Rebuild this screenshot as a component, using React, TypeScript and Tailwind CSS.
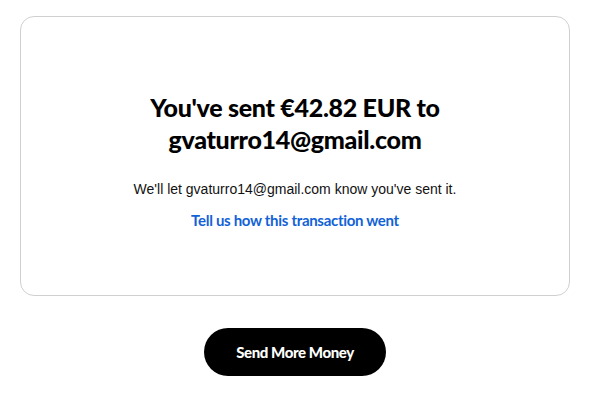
import React from "react";

export default function App() {
  return (
    <div className="min-h-[406px] w-[592px] bg-white pt-[16px] pl-[20px] font-['Lato','Noto_Sans',sans-serif]">
      <div className="flex h-[280px] w-[550px] flex-col items-center rounded-[14px] border border-[#d0d0d0] pt-[74px] text-center">
        <h1 className="text-[25px] font-black leading-[32px] tracking-[-0.3px] text-black">
          You've sent €42.82 EUR to
          <br />
          gvaturro14@gmail.com
        </h1>
        <p className="mt-[25px] font-['Liberation_Sans',Arial,sans-serif] text-[14px] leading-[18px] text-[#111]">
          We'll let gvaturro14@gmail.com know you've sent it.
        </p>
        <a
          className="mt-[12px] text-[15px] font-bold leading-[20px] tracking-[-0.3px] text-[#1262d6]"
          href="#"
        >
          Tell us how this transaction went
        </a>
      </div>
      <div className="flex w-[550px] justify-center pt-[32px]">
        <button className="h-[48px] w-[182px] rounded-full bg-black text-[15px] font-black tracking-[-0.4px] text-white">
          Send More Money
        </button>
      </div>
    </div>
  );
}
